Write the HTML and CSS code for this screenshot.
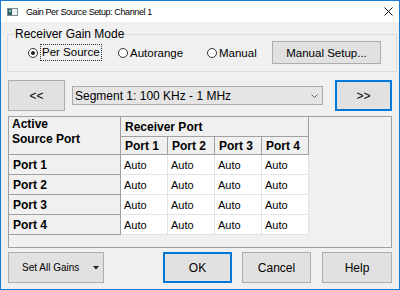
FILE: index.html
```html
<!DOCTYPE html>
<html lang="en">
  <head>
    <meta charset="UTF-8" />
    <title>Gain Per Source Setup: Channel 1</title>
    <link rel="stylesheet" href="styles.css">
  </head>
  <body>
    <div class="window">
      <div class="titlebar">
        <svg class="app-icon" width="11" height="8" viewBox="0 0 11 8">
          <rect x="0.5" y="0.5" width="10" height="7" fill="#eef2f4" stroke="#7d8a92" />
          <rect x="1" y="1" width="4" height="6" fill="#2f5f62" />
          <rect x="2" y="2" width="2" height="2" fill="#7fd0c0" />
        </svg>
        <span class="title">Gain Per Source Setup: Channel 1</span>
        <svg class="close" width="9" height="9" viewBox="0 0 9 9">
          <path d="M0.5 0.5 L8.5 8.5 M8.5 0.5 L0.5 8.5" stroke="#111" stroke-width="1" />
        </svg>
      </div>

      <div class="content">
        <fieldset class="gain-mode">
          <legend>Receiver Gain Mode</legend>
          <div class="mode-row">
            <label class="radio opt-source">
              <span class="dot checked"></span>
              <span class="focus">Per Source</span>
            </label>
            <label class="radio opt-auto">
              <span class="dot"></span>
              <span>Autorange</span>
            </label>
            <label class="radio opt-manual">
              <span class="dot"></span>
              <span>Manual</span>
            </label>
            <button class="btn setup">Manual Setup...</button>
          </div>
        </fieldset>

        <div class="nav-row">
          <button class="btn nav">&lt;&lt;</button>
          <div class="segment">
            <span>Segment 1: 100 KHz - 1 MHz</span>
            <svg width="7" height="4" viewBox="0 0 7 4">
              <polyline points="0.5,0.5 3.5,3.5 6.5,0.5" fill="none" stroke="#606060" />
            </svg>
          </div>
          <button class="btn nav default">&gt;&gt;</button>
        </div>

        <div class="grid">
          <table>
            <colgroup>
              <col class="c-head" />
              <col class="c-port" />
              <col class="c-port" />
              <col class="c-port" />
              <col class="c-port" />
            </colgroup>
            <tr class="r-top">
              <th rowspan="2" class="corner">Active<br />Source Port</th>
              <th colspan="4">Receiver Port</th>
            </tr>
            <tr class="r-sub">
              <th>Port 1</th>
              <th>Port 2</th>
              <th>Port 3</th>
              <th>Port 4</th>
            </tr>
            <tr>
              <th>Port 1</th>
              <td>Auto</td><td>Auto</td><td>Auto</td><td>Auto</td>
            </tr>
            <tr>
              <th>Port 2</th>
              <td>Auto</td><td>Auto</td><td>Auto</td><td>Auto</td>
            </tr>
            <tr>
              <th>Port 3</th>
              <td>Auto</td><td>Auto</td><td>Auto</td><td>Auto</td>
            </tr>
            <tr>
              <th>Port 4</th>
              <td>Auto</td><td>Auto</td><td>Auto</td><td>Auto</td>
            </tr>
          </table>
        </div>

        <div class="actions">
          <button class="btn set-all">
            <span>Set All Gains</span>
            <svg width="6" height="4" viewBox="0 0 6 4">
              <polygon points="0,0 6,0 3,3.5" fill="#222" />
            </svg>
          </button>
          <button class="btn action ok default">OK</button>
          <button class="btn action">Cancel</button>
          <button class="btn action help">Help</button>
        </div>
      </div>
    </div>
  </body>
</html>
```

FILE: styles.css
```css
body {
  margin: 0;
  font-family: "Liberation Sans", Arial, sans-serif;
  color: #000;
}
.window {
  width: 400px;
  height: 290px;
  box-sizing: border-box;
  border: 1px solid #1a7cd5;
  background-color: #f0f0f0;
  display: flex;
  flex-direction: column;
  overflow: hidden;
}
.titlebar {
  height: 21px;
  flex: none;
  background-color: #fff;
  display: flex;
  align-items: center;
  padding: 0 6px;
}
.title {
  margin-left: 8px;
  font-size: 9px;
  letter-spacing: -0.4px;
  flex: 1;
}
.content {
  flex: 1;
  display: flex;
  flex-direction: column;
  padding: 0 7px 6px;
}
.gain-mode {
  margin: 6px -5px 0 -1px;
  padding: 0 6px 7px;
  border: 1px solid #dcdcdc;
  min-width: 0;
}
.gain-mode legend {
  font-size: 12px;
  line-height: 13px;
  padding: 0 1px;
}
.mode-row {
  display: flex;
  align-items: center;
  height: 23px;
  padding-left: 14px;
  font-size: 11.5px;
}
.radio {
  display: flex;
  align-items: center;
  gap: 2px;
}
.opt-source {
  width: 90px;
}
.opt-auto {
  width: 89px;
}
.opt-manual {
  width: 65px;
}
.dot {
  width: 10px;
  height: 10px;
  box-sizing: border-box;
  border: 1px solid #333;
  border-radius: 50%;
  background-color: #fff;
  display: flex;
  align-items: center;
  justify-content: center;
}
.dot.checked::after {
  content: "";
  width: 4px;
  height: 4px;
  border-radius: 50%;
  background-color: #222;
}
.focus {
  border: 1px dotted #333;
  padding: 0 1px;
  line-height: 15px;
}
.btn {
  font-family: "Liberation Sans", Arial, sans-serif;
  color: #000;
  background-color: #e1e1e1;
  border: 1px solid #adadad;
  padding: 0;
  box-sizing: border-box;
}
.btn.default {
  border-color: #0078d7;
  box-shadow: inset 0 0 0 1px #0078d7;
}
.setup {
  width: 109px;
  height: 23px;
  font-size: 11.5px;
}
.nav-row {
  display: flex;
  align-items: center;
  margin-top: 8px;
}
.nav {
  width: 57px;
  height: 31px;
  font-size: 12px;
  flex: none;
}
.segment {
  flex: 1;
  height: 19px;
  margin: 0 12px 0 7px;
  box-sizing: border-box;
  border: 1px solid #acacac;
  background-color: #e5e5e5;
  display: flex;
  align-items: center;
  justify-content: space-between;
  padding: 0 4px 0 2px;
  font-size: 12px;
}
.grid {
  margin-top: 5px;
  height: 132px;
  box-sizing: border-box;
  border: 1px solid #a0a0a0;
  background-color: #f0f0f0;
}
table {
  border-spacing: 0;
  table-layout: fixed;
  width: 299px;
}
.c-head {
  width: 112px;
}
.c-port {
  width: 47px;
}
th,
td {
  padding: 0 0 0 3px;
  text-align: left;
  white-space: nowrap;
  box-sizing: border-box;
}
th {
  font-size: 12px;
  font-weight: bold;
  background-color: #f0f0f0;
  border-right: 1px solid #a0a0a0;
  border-bottom: 1px solid #a0a0a0;
  padding-left: 4px;
}
td {
  font-size: 11px;
  background-color: #fff;
  border-right: 1px solid #e3e3e3;
  border-bottom: 1px solid #e3e3e3;
}
tr {
  height: 20px;
}
tr.r-sub {
  height: 18px;
}
th.corner {
  vertical-align: top;
  line-height: 15px;
  padding-left: 3px;
}
.actions {
  display: flex;
  margin-top: 4px;
}
.set-all {
  width: 96px;
  height: 31px;
  font-size: 10px;
  display: flex;
  align-items: center;
  justify-content: space-between;
  padding: 0 4px 0 13px;
}
.action {
  width: 69px;
  height: 31px;
  font-size: 12px;
  margin-left: 10px;
}
.ok {
  margin-left: auto;
}
.help {
  width: 70px;
  margin-left: 11px;
}
```
